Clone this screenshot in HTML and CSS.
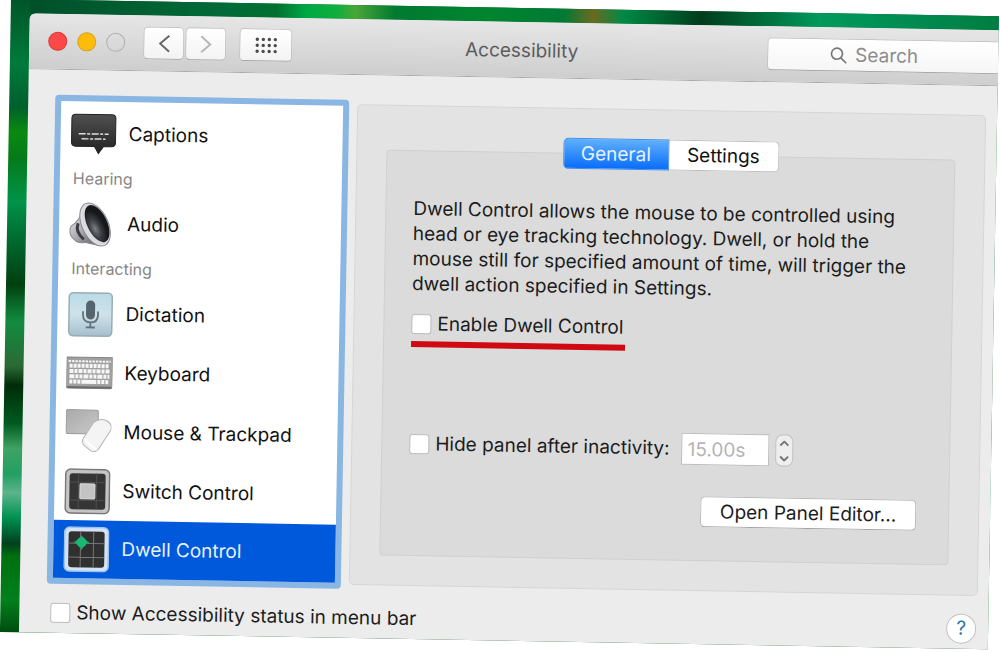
FILE: index.html
```html
<!DOCTYPE html>
<html lang="en">
<head>
  <meta charset="UTF-8" />
  <meta name="viewport" content="width=device-width, initial-scale=1.0" />
  <title>Accessibility</title>
  <link rel="stylesheet" href="styles.css">
</head>
<body>
  <div class="desktop">
    <main class="window">
      <header class="titlebar">
        <div class="lights">
          <span class="light red"></span>
          <span class="light yellow"></span>
          <span class="light off"></span>
        </div>
        <nav class="nav">
          <button type="button" class="tool" aria-label="Back">
            <svg width="12" height="18" viewBox="0 0 12 18"><path d="M11 1 L2 9 L11 17" fill="none" stroke="#666" stroke-width="2"/></svg>
          </button>
          <button type="button" class="tool" aria-label="Forward">
            <svg width="12" height="18" viewBox="0 0 12 18"><path d="M1 1 L10 9 L1 17" fill="none" stroke="#b8b8b8" stroke-width="2"/></svg>
          </button>
        </nav>
        <button type="button" class="tool grid" aria-label="Show all">
          <svg width="24" height="18" viewBox="0 0 24 18" fill="#4a4a4a">
            <g id="dots"><circle cx="3" cy="3" r="1.7"/><circle cx="9" cy="3" r="1.7"/><circle cx="15" cy="3" r="1.7"/><circle cx="21" cy="3" r="1.7"/></g>
            <use href="#dots" y="6"/>
            <use href="#dots" y="12"/>
          </svg>
        </button>
        <h1>Accessibility</h1>
        <label class="search">
          <svg width="20" height="20" viewBox="0 0 20 20" fill="none" stroke="#777" stroke-width="2"><circle cx="8" cy="8" r="6.5"/><path d="M12.7 12.7 L19 19"/></svg>
          <input type="text" placeholder="Search" aria-label="Search">
        </label>
      </header>

      <div class="content">
        <ul class="sidebar">
          <li><a href="#captions">
            <svg class="icon" viewBox="0 0 46 46">
              <defs><linearGradient id="cap" x2="0" y2="1"><stop offset="0" stop-color="#505050"/><stop offset="1" stop-color="#222"/></linearGradient></defs>
              <path d="M5 3 H41 Q45 3 45 7 V31 Q45 35 41 35 H33 L28 42 L24 35 H5 Q1 35 1 31 V7 Q1 3 5 3 Z" fill="url(#cap)" stroke="#222"/>
              <path d="M8 22.5 H38 M11 27.5 H35" stroke="#ddd" stroke-width="1.5" stroke-dasharray="7 1.5 3 1.5"/>
            </svg>
            Captions</a></li>
          <li class="group">Hearing</li>
          <li><a href="#audio">
            <svg class="icon" viewBox="0 0 46 46">
              <defs>
                <linearGradient id="metal" y2="1"><stop offset="0" stop-color="#f4f4f6"/><stop offset=".5" stop-color="#a9a9b0"/><stop offset="1" stop-color="#55555c"/></linearGradient>
                <radialGradient id="cone" cx=".3" cy=".6"><stop offset="0" stop-color="#7d8288"/><stop offset=".5" stop-color="#3a3d42"/><stop offset="1" stop-color="#17181b"/></radialGradient>
              </defs>
              <path d="M2 25 Q-1 33 5 38 Q10 43 16 41 L30 44 L14 8 Q10 20 2 25 Z" fill="url(#metal)" stroke="#88888e"/>
              <path d="M9 22 Q6 31 15 38" fill="none" stroke="#3b3b42" stroke-width="3"/>
              <ellipse cx="26" cy="23" rx="13" ry="23" transform="rotate(-26 26 23)" fill="#dcdce0" stroke="#8a8a90"/>
              <ellipse cx="28" cy="22" rx="10" ry="20" transform="rotate(-26 28 22)" fill="url(#cone)"/>
            </svg>
            Audio</a></li>
          <li class="group">Interacting</li>
          <li><a href="#dictation">
            <svg class="icon" viewBox="0 0 46 46">
              <defs><linearGradient id="dict" x2="0" y2="1"><stop offset="0" stop-color="#b9dbe6"/><stop offset=".5" stop-color="#cfe2ea"/><stop offset="1" stop-color="#a5bfcc"/></linearGradient></defs>
              <rect x="1.5" y="1.5" width="43" height="43" rx="4" fill="url(#dict)" stroke="#9aacb4" stroke-width="1.5"/>
              <rect x="18.500" y="9" width="9" height="19" rx="4.5" fill="#56646e"/>
              <path d="M15.500 20 V24 Q16 31 23 31 Q30 31 30.500 24 V20 M23 31 V35 M18.500 36 H27.500" fill="none" stroke="#62717b" stroke-width="1.8"/>
            </svg>
            Dictation</a></li>
          <li><a href="#keyboard">
            <svg class="icon" viewBox="0 0 46 46">
              <path d="M0 7 H46 V36 Q46 38 44 38 H2 Q0 38 0 36 Z" fill="#a0a0a0" stroke="#858585"/>
              <path d="M1 37 H45" stroke="#6c6c6c" stroke-width="2"/>
              <g stroke="#f6f6f6" stroke-width="4">
                <path d="M2 11 H44" stroke-width="2" stroke-dasharray="2.4 1"/>
                <path d="M3 15.5 H43" stroke-dasharray="3 1"/>
                <path d="M3 20.8 H43" stroke-dasharray="4 1 3 1"/>
                <path d="M3 26.1 H43" stroke-dasharray="5 1 3 1 3 1"/>
                <path d="M3 31.4 H43" stroke-dasharray="3 1 3 1 3 1 15 1"/>
              </g>
            </svg>
            Keyboard</a></li>
          <li><a href="#mouse">
            <svg class="icon" viewBox="0 0 46 46">
              <defs><linearGradient id="pad" x2="1" y2="1"><stop offset="0" stop-color="#a9a9a9"/><stop offset="1" stop-color="#c9c9c9"/></linearGradient></defs>
              <rect x="0.5" y="0.5" width="32" height="24" rx="2" fill="url(#pad)" stroke="#999"/>
              <path d="M28 13 Q34 8 41 11 Q48 15 45 21 L33 40 Q29 44 25 41 L19 36 Q16 33 18 29 Z" fill="#f4f4f4" stroke="#b5b5b5"/>
              <path d="M19 29 Q25 37 32 40" fill="none" stroke="#fff" stroke-width="2"/>
            </svg>
            Mouse &amp; Trackpad</a></li>
          <li><a href="#switch">
            <svg class="icon" viewBox="0 0 46 46">
              <rect x="1" y="1" width="44" height="44" rx="5" fill="#c4c4c4" stroke="#777" stroke-width="1.5"/>
              <rect x="5" y="5" width="36" height="36" rx="3" fill="#353535"/>
              <path d="M5 14 H41 M5 32 H41 M14 5 V41 M32 5 V41" stroke="#505050"/>
              <rect x="15.500" y="15.500" width="15" height="15" rx="1" fill="#c4c4c4" stroke="#ddd"/>
            </svg>
            Switch Control</a></li>
          <li><a href="#dwell" class="selected">
            <svg class="icon" viewBox="0 0 46 46">
              <rect x="1" y="1" width="44" height="44" rx="5" fill="#d3e3f5" stroke="#9cc2ee" stroke-width="1.5"/>
              <rect x="5" y="5" width="36" height="36" rx="3" fill="#303030"/>
              <path d="M5 17 H41 M5 31 H41 M17 5 V41 M30 5 V41" stroke="#777"/>
              <path d="M18 9 L21 13 L26 16 L21 19 L18 24 L15 19 L10 16 L15 13 Z" fill="#16a765"/>
              <circle cx="18" cy="16" r="5" fill="#1bb871"/>
            </svg>
            Dwell Control</a></li>
        </ul>

        <section class="panel">
          <div class="box">
            <div class="tabs">
              <button type="button" class="tab active">General</button>
              <button type="button" class="tab">Settings</button>
            </div>
            <p>Dwell Control allows the mouse to be controlled using<br>
              head or eye tracking technology. Dwell, or hold the<br>
              mouse still for specified amount of time, will trigger the<br>
              dwell action specified in Settings.</p>
            <div class="row">
              <label class="check marked"><input type="checkbox"> Enable Dwell Control</label>
            </div>
            <div class="row hide-row">
              <label class="check"><input type="checkbox"> Hide panel after inactivity:</label>
              <input type="text" class="seconds" value="15.00s" aria-label="Seconds of inactivity" disabled>
              <div class="stepper">
                <button type="button" aria-label="Increase" disabled><svg width="10" height="6" viewBox="0 0 10 6"><path d="M1 5 L5 1 L9 5" fill="none" stroke="#777" stroke-width="2"/></svg></button>
                <button type="button" aria-label="Decrease" disabled><svg width="10" height="6" viewBox="0 0 10 6"><path d="M1 1 L5 5 L9 1" fill="none" stroke="#777" stroke-width="2"/></svg></button>
              </div>
            </div>
            <button type="button" class="editor">Open Panel Editor...</button>
          </div>
        </section>
      </div>

      <footer>
        <label class="check"><input type="checkbox"> Show Accessibility status in menu bar</label>
        <button type="button" class="help" aria-label="Help">?</button>
      </footer>
    </main>
  </div>
</body>
</html>
```
FILE: styles.css
```css
* {
  box-sizing: border-box;
}
html {
  background: #fff;
}
body {
  display: flow-root;
  min-height: 100vh;
  margin: 0;
  color: #1c1c1c;
  font-family: Inter, Roboto, sans-serif;
  font-size: 19px;
  line-height: 24px;
  overflow: hidden;
}
button, input {
  font: inherit;
  color: inherit;
  margin: 0;
}

/* wallpaper, the whole desktop leans one degree */
.desktop {
  margin: -1px 1px 0 11px;
  padding: 14px 0 0 19px;
  transform: rotate(1deg);
  transform-origin: 0 0;
  background:
    linear-gradient(90deg, #00502a, #006b38 20%, #00702f 25%, #00a845 28%, #0fae3c 31%, #4aa53a 33%, #007a30 37%, #00852f 46%, #007a35 54%, #6a6a20 57%, #008a45 60%, #003d1c 68%, #009a5c 80%, #008a50 90%, #007a3c) 19px 0 / 100% 14px no-repeat,
    linear-gradient(#005528, #007a3a 10%, #00602c 17%, #0a8a10 21%, #067a1a 25%, #00934a 32%, #006a30 38%, #004010 45%, #128c40 51%, #2a6a35 58%, #002c08 61%, #005a20 67%, #3fa365 71%, #22a062 75%, #5cb48c 78%, #009050 82%, #00401c 86%, #007010 88%, #00801c 95%, #004d10);
}
.window {
  background: #ececec;
  border-radius: 6px 0 0 0;
}

.titlebar {
  display: flex;
  align-items: center;
  height: 56px;
  padding-left: 19px;
  background: linear-gradient(#e6e6e6, #cecece);
  border-bottom: 1px solid #a9a9a9;
  border-radius: 6px 0 0 0;
}
.lights {
  display: flex;
  gap: 10px;
  width: 95px;
}
.light {
  width: 19px;
  height: 19px;
  border-radius: 50%;
  border: 1px solid #b0b0b0;
}
.red {
  background: #fb4848;
  border-color: #d9383a;
}
.yellow {
  background: #fdbc0c;
  border-color: #dd9f1c;
}
.nav {
  display: flex;
  gap: 1px;
}
.tool {
  display: flex;
  align-items: center;
  justify-content: center;
  width: 41px;
  height: 33px;
  padding: 0;
  background: linear-gradient(#fff, #f3f3f3);
  border: 1px solid #c4c4c4;
  border-bottom-color: #a8a8a8;
  border-radius: 5px;
}
.grid {
  width: 53px;
  margin-left: 13px;
}
.titlebar h1 {
  flex: 1;
  margin: 0;
  padding: 2px 16px 0 0;
  font-size: 19px;
  font-weight: 400;
  text-align: center;
  color: #5c5c5c;
}
.search {
  display: flex;
  align-items: center;
  gap: 8px;
  width: 231px;
  height: 33px;
  padding-left: 62px;
  background: linear-gradient(#fff, #f6f6f6);
  border: 1px solid #c4c4c4;
  border-right: 0;
  border-bottom-color: #a8a8a8;
  border-radius: 5px 0 0 5px;
}
.search input {
  width: 100%;
  padding: 0;
  border: 0;
  outline: 0;
  background: none;
}
.search input::placeholder {
  color: #8c8c8c;
}

.content {
  display: flex;
  gap: 8px;
  padding: 25px 11px 0 27px;
}
.sidebar {
  width: 294px;
  margin: 0;
  padding: 3px 0 0;
  list-style: none;
  background: #fff;
  border: 6px solid #8ab6e4;
  border-radius: 4px;
}
.sidebar a {
  display: flex;
  align-items: center;
  gap: 12px;
  height: 59px;
  padding-left: 10px;
  color: #111;
  text-decoration: none;
}
.sidebar a.selected {
  height: 58px;
  background: #0058da;
  color: #e6f2ff;
}
.icon {
  width: 46px;
  height: 46px;
}
.group {
  height: 31px;
  padding-left: 13px;
  font-size: 16px;
  line-height: 31px;
  color: #868686;
}

.panel {
  flex: 1;
  margin: 4px 0;
  padding: 44px 29px 29px;
  background: #e3e3e3;
  border: 1px solid #d6d6d6;
  border-radius: 5px;
}
.box {
  height: 100%;
  padding: 0 32px 0 27px;
  background: #dbdbdb;
  border: 1px solid #d0d0d0;
  border-radius: 4px;
}
.tabs {
  display: flex;
  justify-content: center;
  margin: -16px 0 0 5px;
}
.tab {
  width: 110px;
  height: 31px;
  padding: 0;
  background: #fff;
  border: 1px solid #bcbcbc;
  border-left: 0;
  border-radius: 0 5px 5px 0;
  color: #111;
}
.tab.active {
  width: 106px;
  background: linear-gradient(#5fb0fb, #0a6dfb);
  border: 1px solid #3d8ff0;
  border-radius: 5px 0 0 5px;
  color: #e6f2ff;
}
.box p {
  margin: 30px 0 14px;
  line-height: 25px;
  white-space: nowrap;
}
.row {
  display: flex;
  align-items: center;
}
.check {
  display: flex;
  align-items: center;
  gap: 6px;
  white-space: nowrap;
}
.check input {
  appearance: none;
  width: 20px;
  height: 20px;
  background: #fff;
  border: 1px solid #bdbdbd;
  border-radius: 3px;
}
.marked {
  padding: 2px 2px 5px 0;
  border-bottom: 6px solid #cf0a12;
}
.hide-row {
  margin: 81px 0 31px;
}
.seconds {
  width: 88px;
  height: 32px;
  margin-left: 12px;
  padding: 0 5px;
  background: #fff;
  border: 1px solid #bdbdbd;
  color: #b4b4b4;
}
.stepper {
  display: flex;
  flex-direction: column;
  width: 18px;
  height: 32px;
  margin-left: 6px;
  background: #eee;
  border: 1px solid #c2c2c2;
  border-radius: 7px;
}
.stepper button {
  display: flex;
  flex: 1;
  align-items: center;
  justify-content: center;
  padding: 0;
  background: none;
  border: 0;
}
.editor {
  display: block;
  width: 216px;
  height: 31px;
  margin-left: auto;
  padding: 0;
  background: #fff;
  border: 1px solid #bababa;
  border-bottom-color: #a2a2a2;
  border-radius: 5px;
}

footer {
  display: flex;
  align-items: center;
  justify-content: space-between;
  height: 49px;
  padding: 8px 12px 0 31px;
}
.help {
  width: 30px;
  height: 30px;
  padding: 0;
  background: #fff;
  border: 1px solid #c6c0c0;
  border-radius: 50%;
  color: #2a78a8;
}
```
